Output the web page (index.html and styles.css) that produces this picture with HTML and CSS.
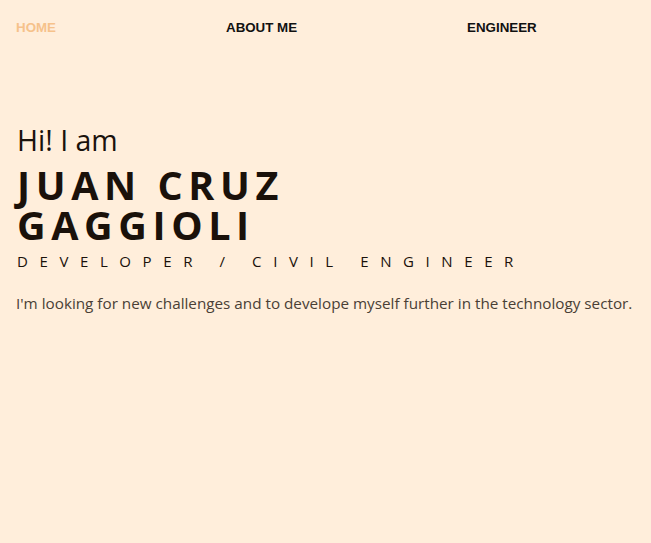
FILE: index.html
```html
<!DOCTYPE html>
<html lang="en">
<head>
<meta charset="utf-8">
<title>Juan Cruz Gaggioli</title>
<link rel="stylesheet" href="styles.css">
</head>
<body>
<nav class="nav">
  <a class="nav-link active" href="#">HOME</a>
  <a class="nav-link" href="#">ABOUT ME</a>
  <a class="nav-link" href="#">ENGINEER</a>
</nav>
<main class="hero">
  <p class="hello">Hi! I am</p>
  <h1 class="name">JUAN CRUZ<br>GAGGIOLI</h1>
  <p class="role">DEVELOPER / CIVIL ENGINEER</p>
  <p class="intro">I'm looking for new challenges and to develope myself further in the technology sector.</p>
</main>
</body>
</html>
```
FILE: styles.css
```css
html, body {
  margin: 0;
  padding: 0;
}
body {
  background: #ffeedb;
  width: 651px;
  height: 543px;
  overflow: hidden;
  font-family: "Open Sans", sans-serif;
}
.nav {
  display: flex;
  gap: 170px;
  padding: 20px 16px 0;
  height: 20px;
}
.nav-link {
  font-family: "Liberation Sans", Arial, sans-serif;
  font-weight: bold;
  font-size: 13.33px;
  color: #111;
  text-decoration: none;
  line-height: 15px;
}
.nav-link.active {
  color: #f6c28b;
}
.hero {
  padding: 82px 17px 0;
}
.hello {
  margin: 0;
  font-size: 28.5px;
  line-height: 36px;
  color: #1a120c;
}
.name {
  margin: 7px 0 0;
  font-size: 39.5px;
  line-height: 40px;
  font-weight: 700;
  letter-spacing: 5.6px;
  color: #1a110a;
}
.role {
  margin: 5px 0 0;
  font-size: 15px;
  letter-spacing: 11.6px;
  line-height: 22px;
  color: #1a110a;
}
.intro {
  margin: 20px 0 0 -1px;
  font-size: 15.25px;
  color: #4a3f36;
  line-height: 22px;
}
```
